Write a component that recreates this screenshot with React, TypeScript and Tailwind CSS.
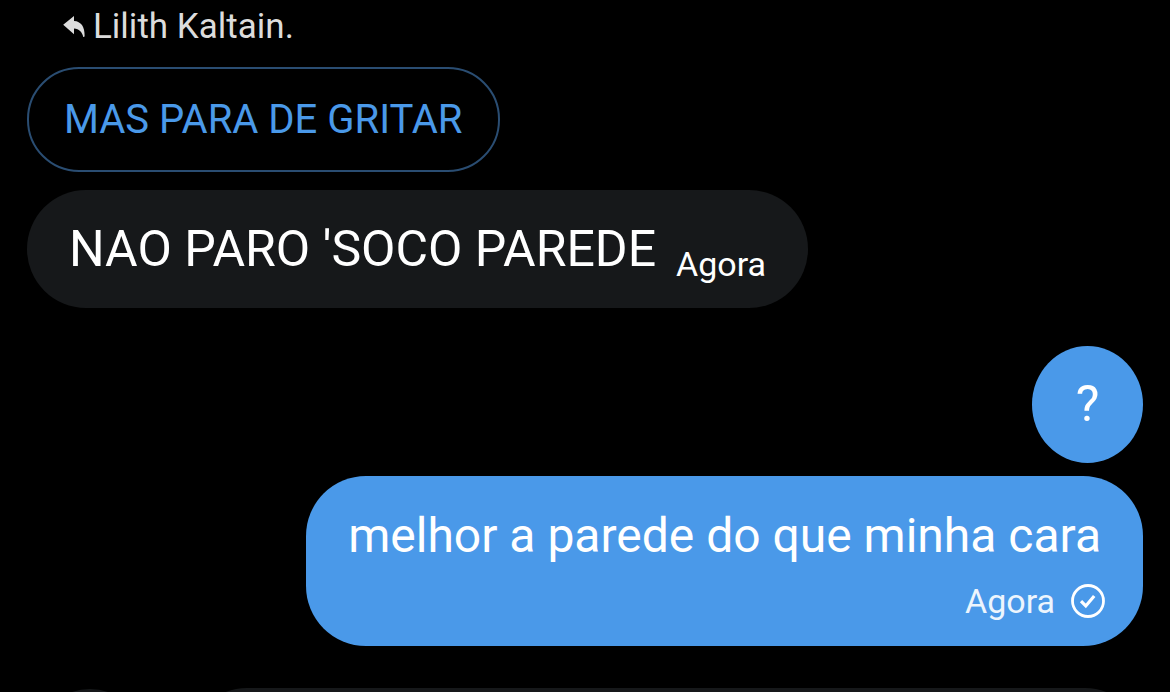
import type { ReactNode } from "react";

function ReplyIcon() {
  return (
    <svg viewBox="0 0 22 22" className="h-[22px] w-[22px] shrink-0" fill="currentColor" aria-hidden="true">
      <path d="M0.200 8.800 11 0V5C18 5.300 21.800 10.600 21.600 20Q21.500 21.300 20.300 21C18.800 15.800 16.200 13 11 12.600V18.200Z" />
    </svg>
  );
}

function SentIcon() {
  return (
    <svg
      viewBox="0 0 34 34"
      className="size-[34px] shrink-0"
      fill="none"
      stroke="currentColor"
      role="img"
      aria-label="Enviada"
    >
      <circle cx="17" cy="17" r="15.500" strokeWidth="2.800" />
      <path d="M10 17.200 14.800 22 23.200 12" strokeWidth="3.200" />
    </svg>
  );
}

function Bubble({ className, children }: { className: string; children: ReactNode }) {
  return <div className={`flex px-[42px] text-white ${className}`}>{children}</div>;
}

export default function App() {
  return (
    <main className="flex h-screen flex-col overflow-hidden bg-black px-[27px] font-['Roboto',sans-serif]">
      <section className="flex flex-col items-start">
        <p className="mt-[7px] flex items-center gap-2 pl-9 text-[35px] leading-10 text-[#dcdcdc]">
          <ReplyIcon />
          <span>Lilith Kaltain.</span>
        </p>
        <blockquote className="mt-5 rounded-[52px] border-2 border-[#2a4d72] px-[35px] pt-[27px] pb-[26px] text-[40px] leading-[48px] text-[#4a99e9]">
          MAS PARA DE GRITAR
        </blockquote>
        <Bubble className="mt-[18px] items-end gap-5 rounded-[60px] bg-[#16181a] pt-[30px] pb-6">
          <p className="pb-[6px] text-[50px] leading-[58px]">NAO PARO 'SOCO PAREDE</p>
          <time className="text-[34px] leading-10">Agora</time>
        </Bubble>
      </section>

      <section className="mt-[38px] flex flex-col items-end gap-[13px]">
        <Bubble className="rounded-[50%] bg-[#4a99e9] pt-[29px] pb-[30px]">
          <p className="w-[27px] text-center text-[50px] leading-[58px]">?</p>
        </Bubble>
        <Bubble className="flex-col rounded-[60px] bg-[#4a99e9] pt-[31px] pb-[25px]">
          <p className="text-[48px] leading-[58px]">melhor a parede do que minha cara</p>
          <div className="-mr-1 mt-4 flex items-center justify-end gap-4">
            <time className="text-[34px] leading-10 text-[#edf5fd]">Agora</time>
            <SentIcon />
          </div>
        </Bubble>
      </section>

      <footer className="mt-[42px] flex shrink-0 items-start gap-11 pl-2">
        <div className="mt-px size-[110px] shrink-0 rounded-full bg-[#16181a]" />
        <div className="h-[118px] grow rounded-[58px] bg-[#16181a]" />
      </footer>
    </main>
  );
}
